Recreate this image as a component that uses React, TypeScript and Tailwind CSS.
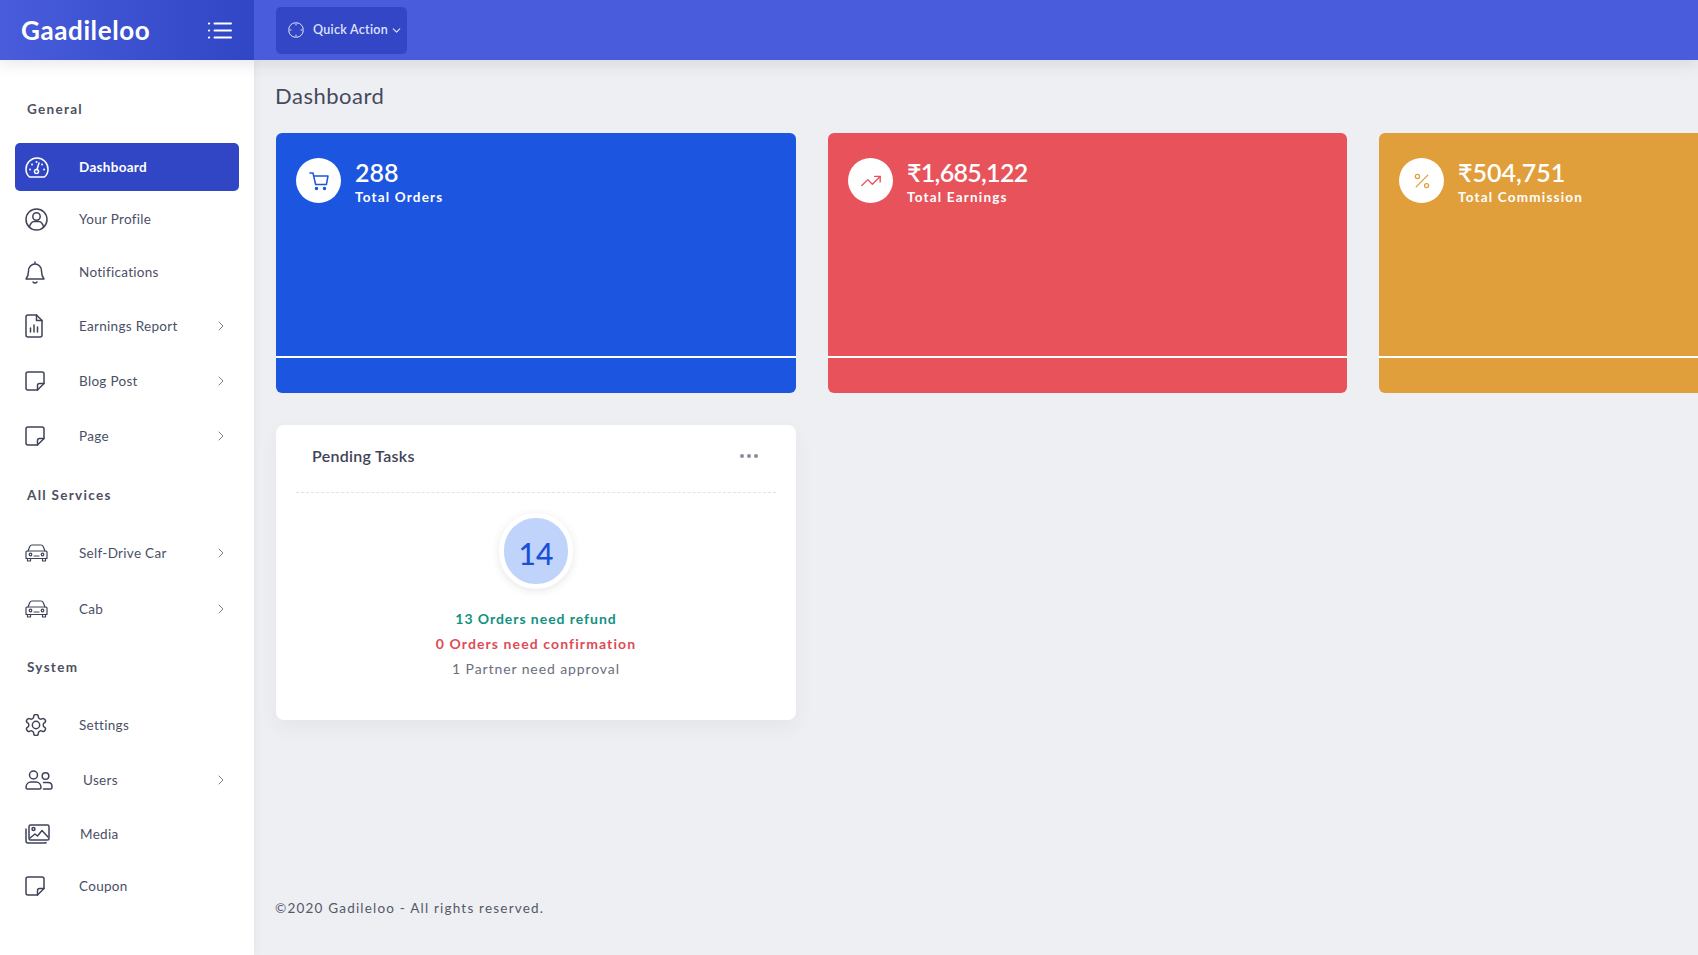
import { ChevronDown, ChevronRight, Percent, TrendingUp } from 'lucide-react'
import type { ReactNode } from 'react'

function Svg({ w, h, vb, sw = 1.5, children }: { w: number; h: number; vb: string; sw?: number; children: ReactNode }) {
  return (
    <svg width={w} height={h} viewBox={vb} fill="none" stroke="currentColor" strokeWidth={sw} strokeLinecap="round" strokeLinejoin="round">
      {children}
    </svg>
  )
}

const GaugeIcon = () => (
  <Svg w={24} h={21} vb="0 0 24 21">
    <path d="M4.500 20C2.200 18 1 15.300 1 12.200 1 6 6 1 12 1s11 5 11 11.200c0 3.100-1.200 5.800-3.500 7.800z" />
    <circle cx="11.500" cy="14.500" r="2" />
    <path d="M12 12.500l2-6.500" />
    <path d="M5 12.500h.1M7 7.500h.1M11.500 5h.1M19 12.500h.1M17 7.500h.1" strokeWidth="1.800" />
  </Svg>
)
const ProfileIcon = () => (
  <Svg w={23} h={23} vb="0 0 23 23">
    <circle cx="11.500" cy="11.500" r="10.500" />
    <circle cx="11.500" cy="8.500" r="3.700" />
    <path d="M4.500 19c.5-3.500 2.800-5.500 4.500-5.500h5c1.700 0 4 2 4.500 5.500" />
  </Svg>
)
const BellIcon = () => (
  <Svg w={20} h={23} vb="0 0 20 23">
    <path d="M10 1v2M3.500 10c0-3.800 2.900-7 6.500-7s6.500 3.200 6.500 7c0 4.500 1 6.200 2.500 8H1c1.500-1.800 2.500-3.500 2.500-8z" />
    <path d="M8 21c1 1.200 3 1.200 4 0" />
  </Svg>
)
const ReportIcon = () => (
  <Svg w={18} h={24} vb="0 0 18 24">
    <path d="M3 1h8.500L17 6.500V21a2 2 0 0 1-2 2H3a2 2 0 0 1-2-2V3a2 2 0 0 1 2-2z" />
    <path d="M11.500 1v5.500H17" />
    <path d="M5.500 18v-4M9 18v-7M12.500 18v-5" />
  </Svg>
)
const NoteIcon = () => (
  <Svg w={20} h={20} vb="0 0 20 20">
    <path d="M12.500 19H3a2 2 0 0 1-2-2V3a2 2 0 0 1 2-2h14a2 2 0 0 1 2 2v9.500z" />
    <path d="M12.500 19v-4.500a2 2 0 0 1 2-2H19" />
  </Svg>
)
const CarIcon = () => (
  <Svg w={23} h={18} vb="0 0 23 18" sw={1.2}>
    <path d="M3 7l1.800-4.500C5.300 1.500 6 1 7 1h9c1 0 1.700.5 2.200 1.500L20 7" />
    <path d="M1 8a1 1 0 0 1 1-1h19a1 1 0 0 1 1 1v6.500H1z" />
    <path d="M2.500 14.500V17h3v-2.500M17.500 14.500V17h3v-2.500" />
    <circle cx="5.500" cy="10.500" r="1.300" />
    <circle cx="17.500" cy="10.500" r="1.300" />
    <path d="M9 12h5" />
  </Svg>
)
const GearIcon = () => (
  <Svg w={22} h={22} vb="1.500 1.500 21 21" sw={1.400}>
    <path d="M12.220 2h-.440a2 2 0 0 0-2 2v.180a2 2 0 0 1-1 1.730l-.430.250a2 2 0 0 1-2 0l-.150-.080a2 2 0 0 0-2.730.730l-.220.380a2 2 0 0 0 .730 2.730l.150.100a2 2 0 0 1 1 1.720v.510a2 2 0 0 1-1 1.740l-.150.090a2 2 0 0 0-.730 2.730l.220.380a2 2 0 0 0 2.730.730l.150-.080a2 2 0 0 1 2 0l.430.250a2 2 0 0 1 1 1.730V20a2 2 0 0 0 2 2h.440a2 2 0 0 0 2-2v-.180a2 2 0 0 1 1-1.730l.430-.250a2 2 0 0 1 2 0l.150.080a2 2 0 0 0 2.730-.730l.220-.390a2 2 0 0 0-.730-2.730l-.150-.080a2 2 0 0 1-1-1.740v-.500a2 2 0 0 1 1-1.740l.150-.090a2 2 0 0 0 .730-2.730l-.220-.380a2 2 0 0 0-2.730-.730l-.150.080a2 2 0 0 1-2 0l-.430-.250a2 2 0 0 1-1-1.730V4a2 2 0 0 0-2-2z" />
    <circle cx="12" cy="12" r="3.500" />
  </Svg>
)
const UsersIcon = () => (
  <Svg w={28} h={20} vb="0 0 28 20">
    <circle cx="8.500" cy="5" r="4" />
    <path d="M1 17.500c0-3.500 2.500-5.500 5-5.500h5c2.500 0 5 2 5 5.500 0 1-.5 1.500-1.500 1.500h-12C1.500 19 1 18.500 1 17.500z" />
    <circle cx="20.500" cy="6" r="3.300" />
    <path d="M18.500 12.500H23c2.500 0 4 1.800 4 4.200 0 1.500-.5 2.300-1.500 2.300H18.500" />
  </Svg>
)
const MediaIcon = () => (
  <Svg w={25} h={20} vb="0 0 25 20">
    <path d="M21 18.500a.5.500 0 0 1-.5.500H3a2 2 0 0 1-2-2V5" />
    <rect x="4" y="1" width="20" height="15" rx="1.500" />
    <circle cx="8.500" cy="5" r="1.500" />
    <path d="M5 14l5-4 2.500 2 4.500-5.500 6 6.500" />
  </Svg>
)

const CartIcon = () => (
  <Svg w={20} h={20} vb="0 0 20 20">
    <path d="M1 2h3l2.600 11.500h10" />
    <path d="M4.700 5H19l-1.600 8.500" />
    <circle cx="7.500" cy="17.500" r="1" fill="currentColor" />
    <circle cx="15.500" cy="17.500" r="1" fill="currentColor" />
  </Svg>
)

const ListIcon = () => (
  <svg width="24" height="17" viewBox="0 0 24 17" fill="none" stroke="#fff" strokeWidth="2" strokeLinecap="round">
    <path d="M6.500 1.500h16.500M6.500 8.500h16.500M6.500 15.500h16.500" />
    <path d="M1 1.500h.1M1 8.500h.1M1 15.500h.1" strokeWidth="2.200" />
  </svg>
)

const TargetIcon = () => (
  <svg width="16" height="16" viewBox="0 0 16 16" fill="none" stroke="#dfe4fa" strokeWidth="1" strokeLinecap="round">
    <path d="M7 .700A7.500 7.500 0 0 0 .700 7M9 .700A7.500 7.500 0 0 1 15.300 7M15.300 9A7.500 7.500 0 0 1 9 15.300M7 15.300A7.500 7.500 0 0 1 .700 9" />
    <path d="M.700 8H3M13 8h2.300M8 .700V3M8 13v2.300" />
  </svg>
)

function Heading({ className, children }: { className: string; children: ReactNode }) {
  return <div className={`h-5 pl-[27px] text-[13.500px] leading-5 font-bold tracking-[1.300px] text-[#4c5062] ${className}`}>{children}</div>
}

function MenuItem({
  icon,
  label,
  className = '',
  textClass = '',
  arrow = false,
  active = false,
}: {
  icon: ReactNode
  label: string
  className?: string
  textClass?: string
  arrow?: boolean
  active?: boolean
}) {
  return (
    <div
      className={`mx-[15px] flex h-12 items-center rounded-[5px] pl-[10px] pr-[10px] text-[13.500px] tracking-[0.300px] ${
        active ? 'bg-[#3046c4] font-bold text-white' : 'text-[#4b4f66]'
      } ${className}`}
    >
      <span className={`flex w-[54px] shrink-0 items-center ${active ? 'text-white' : 'text-[#3f4358]'}`}>{icon}</span>
      <span className={`flex-1 ${textClass}`}>{label}</span>
      {arrow && <ChevronRight size={16} strokeWidth={1.500} className="text-[#7d8090]" />}
    </div>
  )
}

function StatCard({
  icon,
  value,
  label,
  bg,
  fg,
  width,
  valueClass = 'tracking-[0px]',
}: {
  icon: ReactNode
  value: string
  label: string
  bg: string
  fg: string
  width: string
  valueClass?: string
}) {
  return (
    <div className={`flex h-[260px] shrink-0 flex-col overflow-hidden rounded-[6px] text-white ${bg} ${width}`}>
      <div className="flex h-[223px] items-start pl-5 pt-[25px]">
        <div className={`flex h-[45px] w-[45px] items-center justify-center rounded-full bg-white ${fg}`}>{icon}</div>
        <div className="ml-[14px]">
          <div className={`-mt-px text-[25px] leading-[30px] font-semibold ${valueClass}`}>{value}</div>
          <div className="text-[13.500px] leading-5 font-bold tracking-[1.200px]">{label}</div>
        </div>
      </div>
      <div className="h-[2px] bg-white" />
    </div>
  )
}

export default function App() {
  return (
    <div className="flex h-[955px] w-[1698px] flex-col overflow-hidden bg-[#edeff2] font-['Lato','Noto_Sans',sans-serif]">
      <header className="z-20 flex h-[60px] shrink-0 bg-[#485cdc] shadow-[0_4px_14px_rgba(60,60,90,0.12)]">
        <div className="flex w-[254px] shrink-0 items-center justify-between bg-gradient-to-r from-[#485cdc] to-[#3046c4] pl-[21px] pr-[22px]">
          <span className="text-[26px] font-bold tracking-[0.600px] text-white">Gaadileloo</span>
          <ListIcon />
        </div>
        <div className="flex items-center pl-[22px]">
          <div className="flex h-[47px] w-[131px] items-center rounded-[5px] bg-[#3346c6] pl-3 text-[12.500px] font-semibold tracking-[0.300px] text-[#dfe4fa]">
            <TargetIcon />
            <span className="ml-[9px]">Quick Action</span>
            <ChevronDown size={13} strokeWidth={2} className="ml-[2px]" />
          </div>
        </div>
      </header>

      <div className="flex min-h-0 flex-1">
        <aside className="z-10 w-[254px] shrink-0 bg-white shadow-[2px_0_8px_rgba(60,60,90,0.05)]">
          <Heading className="mt-[39px]">General</Heading>
          <MenuItem active className="mt-6" icon={<GaugeIcon />} label="Dashboard" />
          <MenuItem className="mt-1" icon={<ProfileIcon />} label="Your Profile" />
          <MenuItem className="mt-[5px]" icon={<BellIcon />} label="Notifications" />
          <MenuItem className="mt-[6px]" icon={<ReportIcon />} label="Earnings Report" arrow />
          <MenuItem className="mt-[7px]" icon={<NoteIcon />} label="Blog Post" arrow />
          <MenuItem className="mt-[7px]" icon={<NoteIcon />} label="Page" arrow />
          <Heading className="mt-[25px]">All Services</Heading>
          <MenuItem className="mt-6" icon={<CarIcon />} label="Self-Drive Car" arrow />
          <MenuItem className="mt-2" icon={<CarIcon />} label="Cab" arrow />
          <Heading className="mt-6">System</Heading>
          <MenuItem className="mt-6" icon={<GearIcon />} label="Settings" />
          <MenuItem className="mt-[7px]" icon={<UsersIcon />} label="Users" textClass="pl-1" arrow />
          <MenuItem className="mt-[6px]" icon={<MediaIcon />} label="Media" textClass="pl-[1px]" />
          <MenuItem className="mt-1" icon={<NoteIcon />} label="Coupon" />
        </aside>

        <main className="min-w-0 flex-1 overflow-hidden pl-[22px]">
          <h1 className="-ml-px mt-[21px] h-[30px] text-[22px] leading-[30px] tracking-[0.500px] text-[#454a5f]">Dashboard</h1>

          <div className="mt-[22px] flex gap-8">
            <StatCard icon={<CartIcon />} value="288" label="Total Orders" bg="bg-[#1c56e0]" fg="text-[#1c56e0]" width="w-[520px]" />
            <StatCard icon={<TrendingUp size={22} strokeWidth={1.500} />} value="₹1,685,122" label="Total Earnings" bg="bg-[#e8525b]" fg="text-[#e8525b]" width="w-[519px]" valueClass="tracking-[-0.700px]" />
            <StatCard icon={<Percent size={20} strokeWidth={1.500} />} value="₹504,751" label="Total Commission" bg="bg-[#e09f3b]" fg="text-[#e09f3b]" width="w-[520px]" />
          </div>

          <section className="mt-8 h-[295px] w-[520px] rounded-[8px] bg-white px-[20px] shadow-[0_8px_20px_rgba(60,60,90,0.05)]">
            <div className="flex h-[68px] items-center justify-between border-b border-dashed border-[#e2e3e8] pb-[6px] pl-[16px] pr-[18px]">
              <span className="text-[16px] font-semibold tracking-[0.300px] text-[#3f4358]">Pending Tasks</span>
              <span className="flex gap-[3px]">
                <i className="h-1 w-1 rounded-full bg-[#8a8c99]" />
                <i className="h-1 w-1 rounded-full bg-[#8a8c99]" />
                <i className="h-1 w-1 rounded-full bg-[#8a8c99]" />
              </span>
            </div>
            <div className="flex flex-col items-center">
              <div className="mt-[20px] flex h-[76px] w-[74px] items-center justify-center rounded-full border-[5px] border-white bg-[#bfd3fb] pt-[4px] text-[30px] font-medium text-[#1c4fd8] shadow-[0_2px_8px_rgba(60,60,90,0.12)]">
                14
              </div>
              <div className="mt-[17px] text-[14px] leading-[25px] font-bold tracking-[0.950px] text-[#12917f]">13 Orders need refund</div>
              <div className="text-[14px] leading-[25px] font-bold tracking-[1.100px] text-[#e04a55]">0 Orders need confirmation</div>
              <div className="text-[14px] leading-[25px] tracking-[0.900px] text-[#6b6e7d]">1 Partner need approval</div>
            </div>
          </section>

          <footer className="-ml-px mt-[178px] text-[13.500px] leading-5 tracking-[1.200px] text-[#55586a]">©2020 Gadileloo - All rights reserved.</footer>
        </main>
      </div>
    </div>
  )
}
